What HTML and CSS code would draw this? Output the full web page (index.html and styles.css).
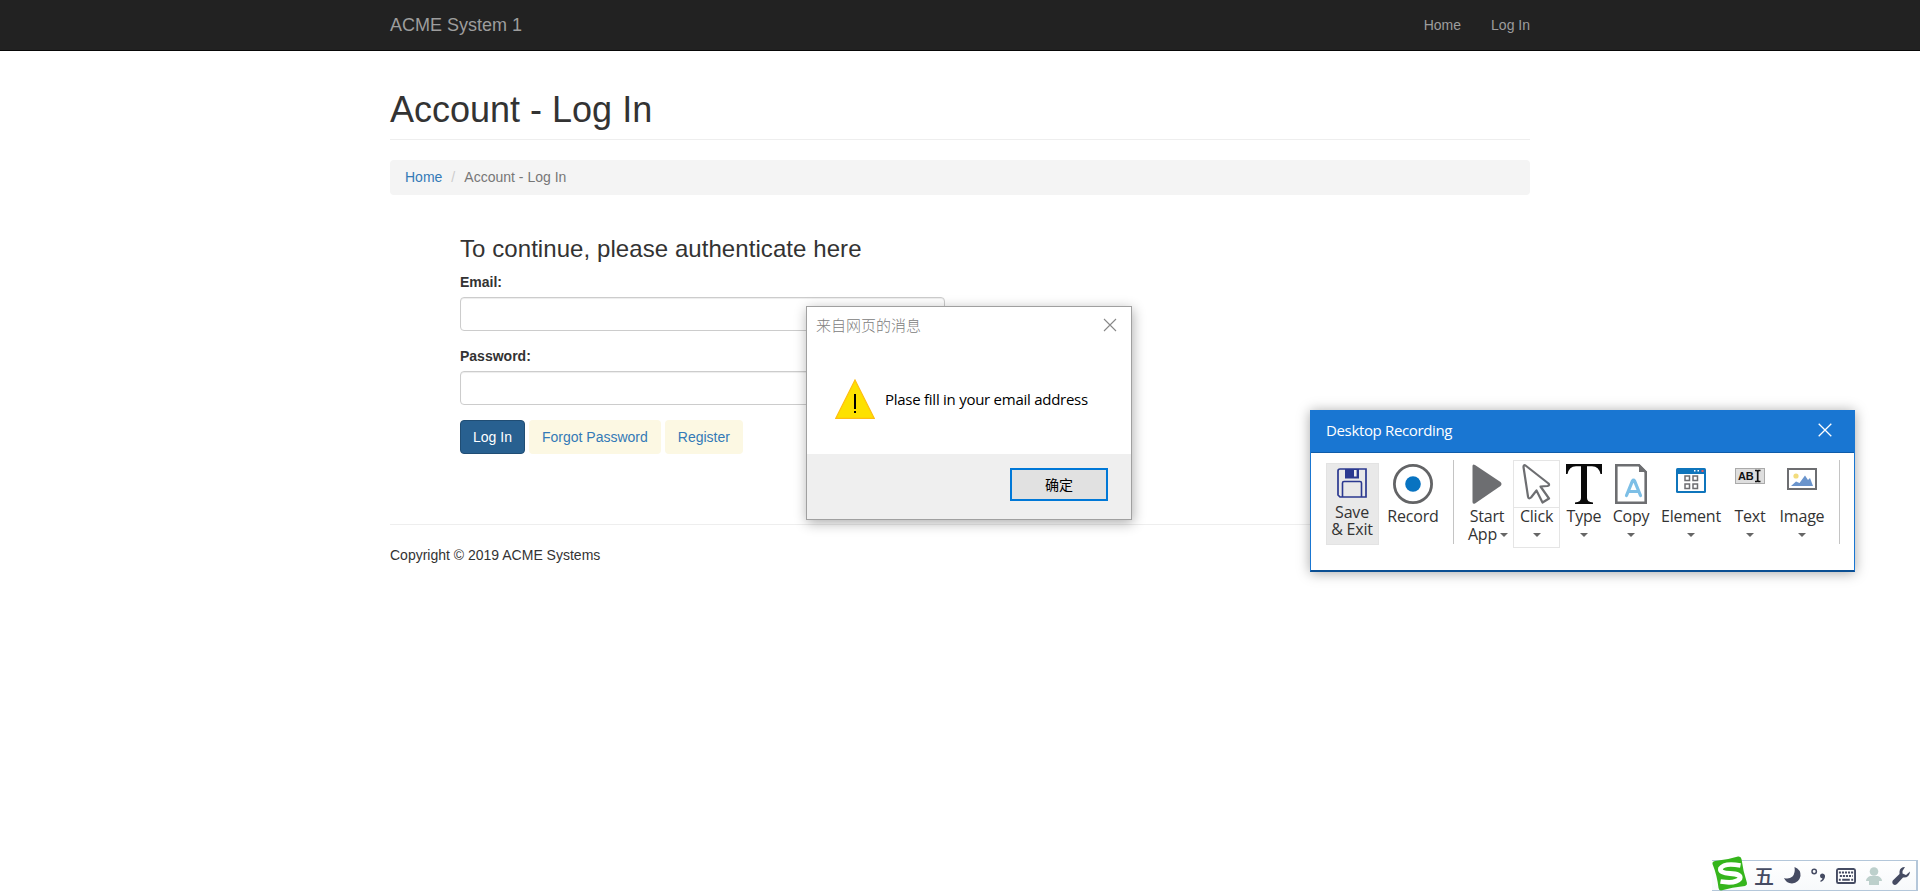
FILE: index.html
```html
<!DOCTYPE html>
<html lang="en">
<head>
<meta charset="utf-8">
<title>ACME System 1 - Log In</title>
<link rel="stylesheet" href="styles.css">
</head>
<body>
<nav class="navbar"><div class="container navbar-inner">
  <a class="brand">ACME System 1</a>
  <div class="nav-links"><a>Home</a><a>Log In</a></div>
</div></nav>
<main class="container">
  <header class="page-header"><h1>Account - Log In</h1></header>
  <ol class="breadcrumb"><li><a>Home</a></li><li class="slash">/</li><li>Account - Log In</li></ol>
  <form class="login">
    <h3>To continue, please authenticate here</h3>
    <label>Email:</label><input class="field" type="text">
    <label>Password:</label><input class="field" type="password">
    <div class="actions"><a class="btn primary">Log In</a><a class="btn soft">Forgot Password</a><a class="btn soft">Register</a></div>
  </form>
  <footer class="footer">Copyright © 2019 ACME Systems</footer>
</main>

<section class="dialog">
  <div class="dialog-title"><span>来自网页的消息</span>
    <svg width="14" height="14" viewBox="0 0 14 14"><path d="M1 1L13 13M13 1L1 13" stroke="#888" stroke-width="1.1"/></svg></div>
  <div class="dialog-body">
    <svg width="40" height="40" viewBox="0 0 40 40"><path d="M20 1L39.3 39.4H.7Z" fill="#fde100" stroke="#ffbe12" stroke-width="1.2"/><path d="M19 15h2v15h-2zM19 32h2v2h-2z" fill="#000"/></svg>
    <span>Plase fill in your email address</span></div>
  <div class="dialog-foot"><button class="ok">确定</button></div>
</section>

<section class="recorder">
  <div class="rec-title"><span>Desktop Recording</span>
    <svg width="14" height="14" viewBox="0 0 14 14"><path d="M.7 .7L13.3 13.3M13.3 .7L.7 13.3" stroke="#fff" stroke-width="1.3"/></svg></div>
  <div class="rec-tools">
    <div class="tool save">
      <svg width="30" height="30" viewBox="0 0 30 30"><path d="M1 3q0-2 2-2H29V29H3L1 27Z" fill="none" stroke="#2b3990" stroke-width="1.7"/><path d="M8 1H22V10.5H8Z" fill="#2b3990"/><path d="M17 2h2.600v6.500H17z" fill="#eee"/><path d="M5.500 29V15q0-1.500 1.500-1.500H23q1.500 0 1.500 1.500V29" fill="none" stroke="#2b3990" stroke-width="1.600"/></svg>
      <span>Save<br>&amp; Exit</span></div>
    <div class="tool record">
      <svg width="40" height="40" viewBox="0 0 40 40"><circle cx="20" cy="20" r="18.600" fill="none" stroke="#636466" stroke-width="2.800"/><circle cx="20" cy="20" r="7.800" fill="#0873c1"/></svg>
      <span>Record</span></div>
    <div class="sep"></div>
    <div class="tool start">
      <svg width="30" height="40" viewBox="0 0 30 40"><path d="M.5 2Q.5-.5 3 1L28.500 18Q30.500 20 28.500 22L3 39.500Q.5 40.500 .5 38Z" fill="#6d6e71"/></svg>
      <span>Start</span><div class="app">App<i class="caret"></i></div></div>
    <div class="tool click">
      <svg width="30" height="40" viewBox="0 0 30 40"><path d="M3.500 1.500L26.500 19.500Q28 21.500 25.500 22L18.500 22.500L27 34.500L20.500 38.500L14.500 26.500L9 33.500Q6.500 35.500 6 32.500L1.500 3Q1.500 .5 3.500 1.500Z" fill="#fff" stroke="#6d6e71" stroke-width="2.200" stroke-linejoin="round"/></svg>
      <span>Click</span><i class="caret"></i></div>
    <div class="tool type">
      <svg width="36" height="40" viewBox="0 0 36 40"><path d="M0 0H36V10H34.500Q33 2.500 26 2.200H21V34Q21 38 27 38.500V40H9V38.500Q15 38 15 34V2.200H10Q3 2.500 1.500 10H0Z" fill="#0a0a0a"/></svg>
      <span>Type</span><i class="caret"></i></div>
    <div class="tool copy">
      <svg width="32" height="40" viewBox="0 0 32 40"><path d="M1.300 1.300H24L30.700 8V38.700H1.300Z" fill="#fff" stroke="#6d6e71" stroke-width="2.600"/><path d="M24 0L32 8H24Z" fill="#6d6e71"/><path d="M11.500 31.500L17.500 16.800Q18.500 15.300 19.500 16.800L25.500 31.500M14 27.500H23" fill="none" stroke="#7dbfe6" stroke-width="3.200" stroke-linecap="round"/></svg>
      <span>Copy</span><i class="caret"></i></div>
    <div class="tool element">
      <svg width="30" height="25" viewBox="0 0 30 25"><rect width="30" height="25" rx="1.500" fill="#0f75bc"/><path d="M2 6H28V23H2Z" fill="#fff"/><path d="M18 2h1.500v1.500H18zM21.500 2H23v1.500h-1.500z" fill="#fff"/><path d="M25.500 2H27.500v2h-2z" fill="#f15b5b"/><path d="M9 8h4.500v4.500H9zM17 8h4.500v4.500H17zM9 16h4.500v4.500H9zM17 16h4.500v4.500H17z" fill="#fff" stroke="#6d6e71" stroke-width="1.500"/></svg>
      <span>Element</span><i class="caret"></i></div>
    <div class="tool text">
      <svg width="30" height="16" viewBox="0 0 30 16"><rect x=".5" y=".5" width="29" height="15" fill="#dedede" stroke="#aaa"/><text x="3" y="12" class="abi">AB</text><path d="M20 2.500H22L22.700 3.500L23.500 2.500H25.500M22.700 3V13M20 13.500H22L22.700 12.500L23.500 13.500H25.500" fill="none" stroke="#111" stroke-width="1.700"/></svg>
      <span>Text</span><i class="caret"></i></div>
    <div class="tool image">
      <svg width="30" height="22" viewBox="0 0 30 22"><path d="M1 1H29V21H1Z" fill="#fff" stroke="#6d6e71" stroke-width="2"/><circle cx="9" cy="8" r="2.600" fill="#f2dc7d"/><path d="M4 18L9 13.500L12.500 15L18 7.500L21 12L23 10L26 18Z" fill="#6a94cc"/></svg>
      <span>Image</span><i class="caret"></i></div>
    <div class="sep last"></div>
  </div>
</section>

<aside class="ime">
  <svg class="ime-logo" width="36" height="36" viewBox="0 0 36 36"><path d="M3 5Q15 4 26 .5Q29 0 29.500 3Q31 15 35 27Q35.500 29 33 30Q20 31 9 34.500Q7 34.500 6.500 32Q5 19 .5 8Q0 5.500 3 5Z" fill="#35b51c"/><path d="M28.500 9.500Q12 6.500 8.500 12.500Q7.500 17 18 17.500Q29.500 18 28 22.500Q24 28 8.500 25.500" fill="none" stroke="#fff" stroke-width="4.800"/></svg>
  <svg class="wu" width="19" height="20"><text x="-1" y="17.500">五</text></svg>
  <svg width="17" height="17" viewBox="0 0 17 17"><path d="M10.500 0Q17 2.500 16.500 9Q15 16 8 16.500Q2 16 0 11Q5 12.500 8.500 9.500Q11.500 6 10.500 0Z" fill="#454b62"/></svg>
  <svg width="15" height="15" viewBox="0 0 15 15"><circle cx="3.200" cy="3.500" r="2.200" fill="none" stroke="#454b62" stroke-width="1.500"/><path d="M9 8q0-2.500 2.500-2.500Q14.500 6 14 9Q13 13 9.500 14V12.500Q11.500 11.500 11.500 10.500Q9 10 9 8Z" fill="#454b62"/></svg>
  <svg width="20" height="16" viewBox="0 0 21 16" preserveAspectRatio="none"><rect x="1" y="1" width="19" height="14" rx="1.500" fill="#fff" stroke="#454b62" stroke-width="2"/><path d="M3 4.500H18M4 8H17.500" stroke="#454b62" stroke-width="2.200" stroke-dasharray="2.200 1"/><path d="M3 11.700H5M6.500 11.700H14.500M16 11.700H18" stroke="#454b62" stroke-width="2"/></svg>
  <svg width="16" height="18" viewBox="0 0 16 18"><circle cx="8" cy="4.500" r="4.300" fill="#bdd0cc"/><path d="M4 9H12Q16 11 16 14H13V18H3V14H0Q0 11 4 9Z" fill="#bdd0cc"/></svg>
  <svg width="18" height="18" viewBox="0 0 18 18"><path d="M13 0Q8 0 7.500 4.500V7L.8 13.500Q-.5 16 1.500 17.500Q3 18.500 5 17L11 10.500Q17.500 11 18 4.500L14 8L10.500 6.500V4Z" fill="#454b62"/></svg>
</aside>
</body>
</html>
```
FILE: styles.css
```css
* { box-sizing: border-box; }
body { margin: 0; height: 893px; overflow: hidden; background: #fff; color: #333; font: 14px/20px "Liberation Sans", Arial, sans-serif; }
svg { display: block; flex: none; }
.container { width: 1140px; margin: 0 auto; }
.navbar { height: 51px; background: #222; border-bottom: 1px solid #080808; color: #9d9d9d; }
.navbar-inner { display: flex; justify-content: space-between; align-items: center; height: 50px; }
.brand { font-size: 18px; }
.nav-links { display: flex; gap: 30px; }
.page-header { padding: 39.4px 0 9px; border-bottom: 1px solid #eee; }
h1 { margin: 0; font-size: 36px; font-weight: 400; line-height: 39.6px; }
.breadcrumb { display: flex; height: 35px; margin: 20px 0 0; padding: 7px 15px 8px; background: #f4f4f4; border-radius: 4px; list-style: none; color: #777; }
.breadcrumb a { color: #337ab7; }
.slash { width: 22px; padding-left: 9px; color: #ccc; }
.login { width: 485px; margin: 41px 0 0 70px; }
h3 { margin: 0 0 10px; font-size: 24px; font-weight: 400; line-height: 26.4px; letter-spacing: .07px; }
label { display: block; margin-bottom: 5px; font-weight: 700; }
.field { display: block; width: 100%; height: 34px; margin-bottom: 15px; border: 1px solid #ccc; border-radius: 4px; background: #fff; box-shadow: inset 0 1px 1px rgba(0,0,0,.075); }
.actions { display: flex; gap: 4px; }
.btn { height: 34px; padding: 6px 12px; border: 1px solid transparent; border-radius: 4px; }
.primary { color: #fff; background: #286090; border-color: #204d74; }
.soft { color: #337ab7; background: #fcf8e3; }
.footer { margin-top: 70px; padding-top: 20px; border-top: 1px solid #eee; }

.dialog { position: absolute; left: 806px; top: 306px; width: 326px; height: 214px; display: flex; flex-direction: column; border: 1px solid #a0a0a0; background: #fff; box-shadow: 1px 3px 12px rgba(0,0,0,.32); color: #000; font-family: "Open Sans", "Noto Sans CJK SC", sans-serif; font-size: 15px; }
.dialog-title { display: flex; justify-content: space-between; align-items: center; height: 36px; padding: 0 14px 0 9px; color: #808080; font-family: "Noto Sans CJK SC", sans-serif; font-weight: 300; }
.dialog-body { display: flex; align-items: center; gap: 10px; height: 111px; padding: 0 0 0 28px; white-space: nowrap; letter-spacing: -.26px; }
.dialog-foot { flex: 1; display: flex; justify-content: flex-end; align-items: flex-start; padding: 14px 23px 0 0; background: #efefef; }
.ok { width: 98px; height: 33px; padding: 0 0 2px; border: 2px solid #0078d7; background: #e1e1e1; color: #000; font: 14px "Noto Sans CJK SC", sans-serif; }

.recorder { position: absolute; left: 1310px; top: 410px; width: 545px; height: 162px; border: 1px solid #1976d2; border-bottom: 2px solid #0b4f93; background: #fff; box-shadow: 0 1px 12px rgba(0,0,0,.35); color: #333; font-family: "Open Sans", sans-serif; font-size: 16px; }
.rec-title { display: flex; justify-content: space-between; align-items: center; height: 42px; padding: 0 22px 4px 15px; background: #1976d2; border-bottom: 1px solid #0f5ca9; color: #fff; font-size: 15px; letter-spacing: -.35px; }
.rec-tools { display: flex; padding: 7px 0 0 15px; }
.tool { flex: none; height: 88px; padding-top: 4px; display: flex; flex-direction: column; align-items: center; line-height: 18px; letter-spacing: -.2px; white-space: nowrap; text-align: center; }
.tool span { margin-top: 3px; }
.save { width: 53px; height: 82px; margin-top: 3px; padding: 4px 1px 0 0; background: #e9e9e9; border: 1px solid #e3e3e3; line-height: 17px; }
.save span { margin-top: 6px; }
.record { width: 68px; }
.sep { width: 1px; height: 84px; margin: 0 8px 0 6px; background: #c4c4c4; }
.last { margin: 0 0 0 8px; }
.start { width: 51px; padding-right: 1px; }
.click { width: 47px; margin: 0 1px 0 0; padding-top: 3px; border: 1px solid #e5e5e5; background: linear-gradient(#e5e5e5, #e5e5e5) 0 46px / 100% 1px no-repeat; }
.type { width: 46px; }
.copy { width: 48px; }
.element { width: 72px; }
.text { width: 46px; }
.image { width: 58px; }
.element, .text, .image { padding-top: 8px; }
.element span { margin-top: 14px; }
.text span { margin-top: 23px; }
.image span { margin-top: 17px; }
.caret { flex: none; width: 0; height: 0; margin-top: 8px; border: 4px solid transparent; border-top-color: #666; border-bottom: 0; }
.app { display: flex; gap: 3px; margin-left: 2px; }
.app .caret { margin-top: 8px; }
.abi { font: 700 11px "Liberation Sans", sans-serif; fill: #111; }

.ime { position: absolute; left: 1712px; top: 860px; width: 206px; height: 31px; display: flex; align-items: center; padding-left: 43px; gap: 10px; border: 1px solid #b4c7da; border-width: 1px 2px 1px 0; background: linear-gradient(#fff, #f7f9fb); }
.ime-logo { position: absolute; left: 0; top: -5px; }
.wu { overflow: visible; font: 500 20px "Noto Sans CJK SC", sans-serif; fill: #454b62; }
```
